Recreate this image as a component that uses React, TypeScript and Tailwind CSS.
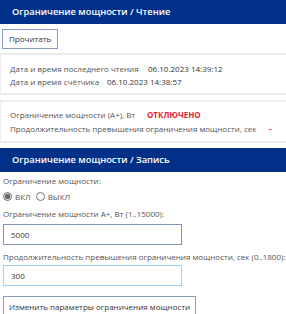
import { useState } from "react";

const font = { fontFamily: '"Open Sans", "Noto Sans", sans-serif' };

const Header = ({ title }: { title: string }) => (
    <div className="h-[24px] bg-[#003087] text-white text-[9.3px] font-semibold flex items-center pl-[12px] whitespace-nowrap">
        {title}
    </div>
);

const App = () => {
    const [enabled, setEnabled] = useState(true);
    const [limit, setLimit] = useState("5000");
    const [duration, setDuration] = useState("300");

    return (
        <div className="w-[286px] h-[314px] overflow-hidden bg-white text-[#555] text-[8px] whitespace-nowrap" style={font}>
            <Header title="Ограничение мощности / Чтение" />

            <div className="pt-[5px] pl-[2px]">
                <button className="h-[20px] px-[6px] border border-[#8a9cc0] bg-white text-[#333] text-[8px]">
                    Прочитать
                </button>
            </div>

            {/* Read values */}
            <div className="mt-[4px] h-[42px] border-y-2 border-l border-[#ececec] pl-[9px] pt-[2px] flex flex-col justify-center gap-[1px] leading-[12px]">
                <div className="flex">
                    <span className="w-[138px]">Дата и время последнего чтения</span>
                    <span className="text-[#333]">06.10.2023 14:39:12</span>
                </div>
                <div className="flex">
                    <span className="w-[97px]">Дата и время счётчика</span>
                    <span className="text-[#333]">06.10.2023 14:38:57</span>
                </div>
            </div>

            <div className="mt-[5px] h-[43px] border-y-2 border-l border-[#ececec] pl-[9px] pt-[1px] flex flex-col justify-center gap-[2px] leading-[12px]">
                <div className="flex">
                    <span className="w-[137px]">Ограничение мощности (А+), Вт</span>
                    <span className="text-[#e0243a] font-bold">ОТКЛЮЧЕНО</span>
                </div>
                <div className="flex">
                    <span className="w-[259px]">Продолжительность превышения ограничения мощности, сек</span>
                    <span className="text-[#e0243a] font-bold">-</span>
                </div>
            </div>

            <div className="mt-[5px]">
                <Header title="Ограничение мощности / Запись" />
            </div>

            {/* Write form */}
            <div className="px-[3px] leading-[13px]">
                <div className="mt-[2px]">Ограничение мощности:</div>
                <div className="mt-[3px] flex items-center gap-[3px]">
                    <label className="flex items-center gap-[3px]">
                        <input
                            type="radio"
                            name="limit"
                            checked={enabled}
                            onChange={() => setEnabled(true)}
                            className="m-0 w-[9px] h-[9px] accent-[#666]"
                        />
                        ВКЛ
                    </label>
                    <label className="flex items-center gap-[3px] ml-[2px]">
                        <input
                            type="radio"
                            name="limit"
                            checked={!enabled}
                            onChange={() => setEnabled(false)}
                            className="m-0 w-[9px] h-[9px] accent-[#666]"
                        />
                        ВЫКЛ
                    </label>
                </div>
                <div className="mt-[4px]">Ограничение мощности А+, Вт (1..15000):</div>
                <input
                    value={limit}
                    onChange={(e) => setLimit(e.target.value)}
                    className="mt-[4px] block w-[179px] h-[21px] border border-[#7f93bb] px-[7px] text-[8px] text-[#333] outline-none"
                />
                <div className="mt-[5px]">Продолжительность превышения ограничения мощности, сек (0..1800):</div>
                <input
                    value={duration}
                    onChange={(e) => setDuration(e.target.value)}
                    className="mt-[2px] block w-[179px] h-[21px] border border-[#9fd0f5] px-[7px] text-[8px] text-[#333] outline-none"
                />
                <button className="mt-[10px] h-[20px] px-[5px] border border-[#8a9cc0] bg-white text-[#333] text-[8px]">
                    Изменить параметры ограничения мощности
                </button>
            </div>
        </div>
    );
};

export default App;
